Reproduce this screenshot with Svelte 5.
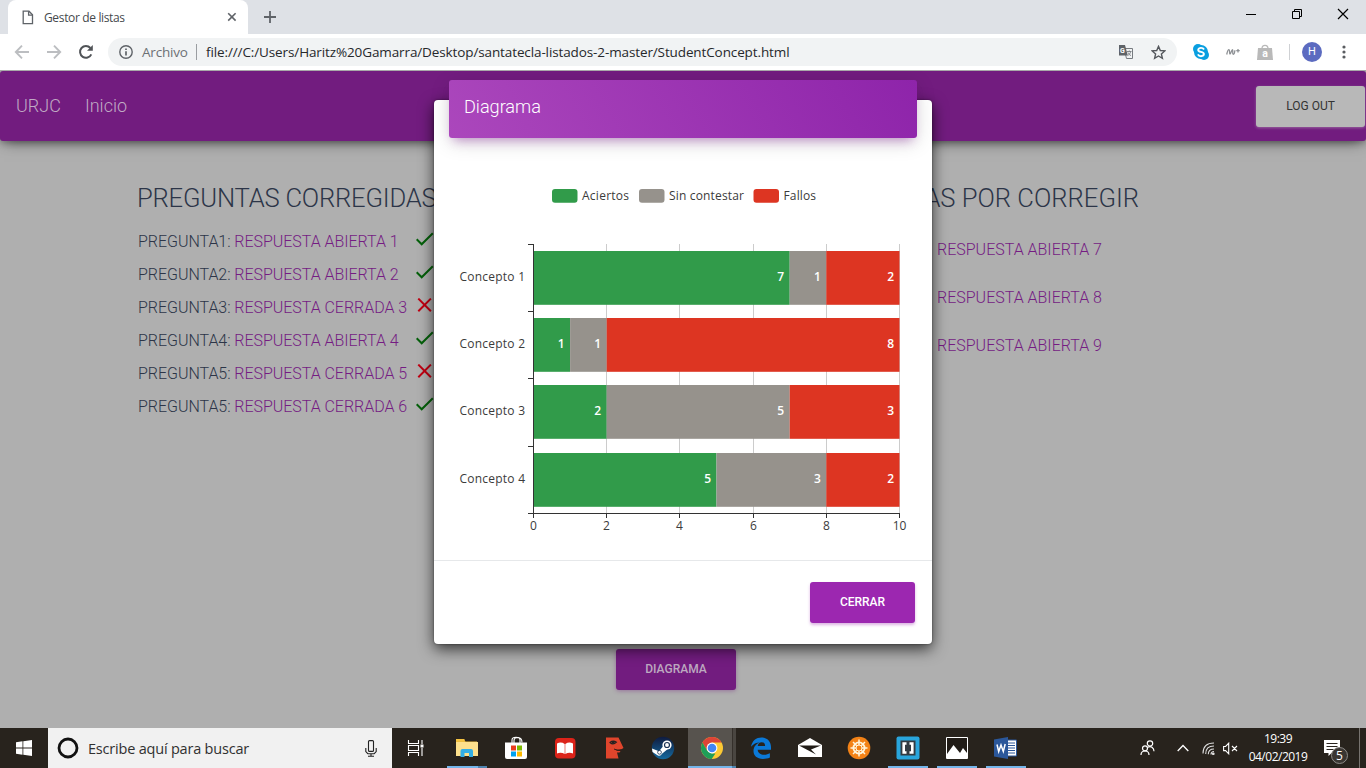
<script>
  const corrected = [
    { n: 'PREGUNTA1:', a: 'RESPUESTA ABIERTA 1', ok: true },
    { n: 'PREGUNTA2:', a: 'RESPUESTA ABIERTA 2', ok: true },
    { n: 'PREGUNTA3:', a: 'RESPUESTA CERRADA 3', ok: false },
    { n: 'PREGUNTA4:', a: 'RESPUESTA ABIERTA 4', ok: true },
    { n: 'PREGUNTA5:', a: 'RESPUESTA CERRADA 5', ok: false },
    { n: 'PREGUNTA5:', a: 'RESPUESTA CERRADA 6', ok: true }
  ];
  const pending = ['RESPUESTA ABIERTA 7', 'RESPUESTA ABIERTA 8', 'RESPUESTA ABIERTA 9'];

  const colors = ['#319b4a', '#96928c', '#dd3522'];
  const legend = [
    { t: 'Aciertos', x: 118, w: 47 },
    { t: 'Sin contestar', x: 205, w: 75 },
    { t: 'Fallos', x: 319.5, w: 32.5 }
  ];
  const X0 = 99, Y0 = 106.5, UNIT = 36.6, BAND = 67.25;
  const rows = [[7, 1, 2], [1, 1, 8], [2, 5, 3], [5, 3, 2]].map((vals, i) => {
    let sum = 0;
    const top = Math.round(Y0 + i * BAND + 6.3);
    return {
      name: `Concepto ${i + 1}`,
      top,
      segs: vals.map((v, k) => {
        const x = X0 + 0.5 + sum * UNIT;
        sum += v;
        return { v, x, w: v * UNIT, fill: colors[k], end: X0 + 0.5 + sum * UNIT };
      })
    };
  });
  const ticks = [0, 2, 4, 6, 8, 10];
  const tx = (t) => Math.round(X0 + t * UNIT) + 0.5;
</script>

<div class="screen">
  <div class="tabs">
    <div class="tab">
      <svg width="12" height="15" viewBox="0 0 12 15" fill="none" stroke="#5f6368" stroke-width="1.3"><path d="M1.2 1.2h5.8l3.5 3.6v8.800H1.2z"/><path d="M6.600 1.200v4h4"/></svg>
      <span>Gestor de listas</span>
      <svg class="tabx" width="10" height="10" viewBox="0 0 10 10" stroke="#5f6368" stroke-width="1.6"><path d="M1.200 1.200l7.400 7.400M8.600 1.200L1.200 8.600"/></svg>
    </div>
    <svg class="plus" width="14" height="14" viewBox="0 0 14 14" stroke="#5f6368" stroke-width="1.8"><path d="M7 1v12M1 7h12"/></svg>
    <div class="win">
      <svg width="12" height="12" viewBox="0 0 12 12" stroke="#000" fill="none"><path d="M1 6.500h10"/></svg>
      <svg width="12" height="12" viewBox="0 0 12 12" stroke="#000" fill="none"><path d="M1.500 3.500h7v7h-7zM3.500 3.500v-2h7v7h-2"/></svg>
      <svg width="12" height="12" viewBox="0 0 12 12" stroke="#000" stroke-width="1.200"><path d="M1 1l10 10M11 1L1 11"/></svg>
    </div>
  </div>

  <div class="toolbar">
    <svg width="16" height="16" viewBox="0 0 16 16" fill="none" stroke="#bcbec1" stroke-width="1.900"><path d="M15 8H2M8 1.700L1.800 8 8 14.300"/></svg>
    <svg width="16" height="16" viewBox="0 0 16 16" fill="none" stroke="#bcbec1" stroke-width="1.900"><path d="M1 8h13M8 1.700L14.200 8 8 14.300"/></svg>
    <svg width="16" height="16" viewBox="0 0 16 16" fill="none" stroke="#505357" stroke-width="2"><path d="M13.300 10.400A5.900 5.900 0 1 1 12.400 4"/><path d="M14.800 1v5.800H9z" fill="#505357" stroke="none"/></svg>
    <div class="omni">
      <svg width="14" height="14" viewBox="0 0 14 14" fill="none" stroke="#5f6368" stroke-width="1.400"><circle cx="7" cy="7" r="6.200"/><path d="M7 6.200v4.300M7 3.400v1.600" stroke-width="1.700"/></svg>
      <span class="arch">Archivo</span><i></i>
      <span class="url">file:///C:/Users/Haritz%20Gamarra/Desktop/santatecla-listados-2-master/StudentConcept.html</span>
      <svg class="tr" width="14" height="14" viewBox="0 0 14 14"><path d="M5 3.500h8.500v10H7.500z" fill="#f1f3f4" stroke="#777b80"/><path d="M0 0h6l2.800 10.500H0z" fill="#5f6368"/><text x="1" y="7.600" font-size="7" font-weight="700" fill="#fff" font-family="Roboto, sans-serif">G</text><path d="M8 6.500h4.500M10.300 5.500v1M11.700 6.500c-.3 2-1.700 3.200-3 4M9 7.500c.5 1.500 1.700 2.600 3 3" fill="none" stroke="#777b80" stroke-width=".9"/></svg>
      <svg class="star" width="15" height="15" viewBox="0 0 15 15" fill="none" stroke="#54575c" stroke-width="1.400"><path d="M7.500 1.400l1.800 4.100 4.500.4-3.400 3 1 4.400-3.900-2.300-3.900 2.300 1-4.400-3.400-3 4.500-.4z"/></svg>
    </div>
    <div class="ext">
      <svg width="16" height="16" viewBox="0 0 16 16"><rect width="10" height="10" rx="5" fill="#0a9fe0"/><rect x="6" y="6" width="10" height="10" rx="5" fill="#0a9fe0"/><circle cx="8" cy="8" r="7" fill="#0a9fe0"/><path d="M11 5.400C10.300 4.200 9.200 3.900 8 3.900c-1.600 0-2.800.7-2.800 2 0 2.700 5.700 1.300 5.700 4.200 0 1.300-1.200 2.100-2.900 2.100-1.500 0-2.500-.5-3.100-1.800" fill="none" stroke="#fff" stroke-width="1.900"/></svg>
      <svg width="14" height="8" viewBox="0 0 14 8" fill="none" stroke="#8d9094" stroke-width="1.300"><path d="M.7 6.500C1.500 3 2.300 1.600 3 1.700c1 .1.100 4.300 1 4.300S5.600 1.600 6.500 1.700c.9.100-.5 4.600.9 4.600 1 0 1.300-1.800 1.500-4M10.300 2.700h3.400M12 1v3.400"/></svg>
      <svg width="16" height="16" viewBox="0 0 16 16"><path d="M5 4.500C5 .2 11 .2 11 4.500" fill="none" stroke="#b9b9b9" stroke-width="1.300"/><path d="M1 4h14l1 12H0z" fill="#b9b9b9"/><text x="8" y="12.800" text-anchor="middle" font-size="10.500" font-weight="700" fill="#fff" font-family="Roboto, sans-serif">a</text></svg>
      <i></i>
      <b>H</b>
      <svg class="dots" width="4" height="14" viewBox="0 0 4 14" fill="#5a5d61"><circle cx="2" cy="2" r="1.600"/><circle cx="2" cy="7" r="1.600"/><circle cx="2" cy="12" r="1.600"/></svg>
    </div>
  </div>

  <div class="page">
    <nav>
      <span>URJC</span><span>Inicio</span>
      <button class="logout">LOG OUT</button>
    </nav>
    <div class="cols">
      <section class="left">
        <h2>PREGUNTAS CORREGIDAS</h2>
        {#each corrected as q}
          <div class="q">
            <p>{q.n} <a>{q.a}</a></p>
            {#if q.ok}
              <svg width="18" height="14" viewBox="0 0 18 14" fill="none" stroke="#04600a" stroke-width="2"><path d="M.7 7.300l5 5L16.800 1.200"/></svg>
            {:else}
              <svg width="18" height="14" viewBox="0 0 18 14" fill="none" stroke="#c00012" stroke-width="2"><path d="M2.300.600l12.600 12.600M14.900.600L2.300 13.200"/></svg>
            {/if}
          </div>
        {/each}
      </section>
      <section class="right">
        <h2>PREGUNTAS POR CORREGIR</h2>
        {#each pending as p}
          <div class="p"><a>{p}</a></div>
        {/each}
      </section>
    </div>
    <button class="diag">DIAGRAMA</button>

    <div class="overlay">
      <div class="modal">
        <header>Diagrama</header>
        <svg class="chart" width="498" height="422" viewBox="0 0 498 422">
          {#each legend as l, i}
            <rect x={l.x} y="51" width="25.500" height="13.700" rx="3" fill={colors[i]} />
            <text x={l.x + 30} y="61.500" textLength={l.w}>{l.t}</text>
          {/each}
          {#each ticks as t}
            <path d="M{tx(t)} 106V375" stroke="#ccc" />
          {/each}
          {#each rows as r}
            {#each r.segs as s}
              <rect x={s.x} y={r.top} width={s.w} height="53.800" fill={s.fill} />
              <text class="v" x={s.end - 5.5} y={r.top + 30} text-anchor="end">{s.v}</text>
            {/each}
            <text x="25.500" y={r.top + 30} textLength="65.500">{r.name}</text>
          {/each}
          <path d="M99.500 106v270M94 375.500h372" stroke="#333" />
          {#each [106.5, 173.5, 240.5, 308.5] as y}
            <path d="M94 {y}h5" stroke="#333" />
          {/each}
          {#each ticks as t}
            <path d="M{tx(t)} 376v4" stroke="#333" />
            <text x={tx(t)} y="391.500" text-anchor="middle">{t}</text>
          {/each}
        </svg>
        <footer><button class="cerrar">CERRAR</button></footer>
      </div>
    </div>
  </div>

  <div class="taskbar">
    <div class="start"><svg width="16" height="16" viewBox="0 0 16 16" fill="#fff"><path d="M0 2.300L6.500 1.300V7.500H0zM7.300 1.200L16 0v7.500H7.300zM0 8.400h6.500v6.300L0 13.700zM7.300 8.400H16V16l-8.700-1.200z"/></svg></div>
    <div class="search">
      <svg width="22" height="22" viewBox="0 0 22 22" fill="none"><circle cx="11" cy="11" r="9" stroke="#111" stroke-width="2.800"/></svg>
      <span>Escribe aquí para buscar</span>
      <svg class="mic" width="12" height="17" viewBox="0 0 12 17" fill="none" stroke="#222" stroke-width="1.100"><rect x="3.500" y=".6" width="5" height="10.800" rx="1"/><path d="M.8 8v3.500l2 2.200h6.400l2-2.200V8M6 13.700V16M3 16.300h6"/></svg>
    </div>
    <div class="slot tv"><svg width="17" height="16" viewBox="0 0 17 16" fill="none" stroke="#fff" stroke-width="1.100"><path d="M1.500 0v3.500h10V0M1.500 16v-3.500h10V16M1.500 5.500h10v5h-10zM15 0v4M15 8v8"/><path d="M13.500 4.500h3v3h-3z" fill="#fff" stroke="none"/></svg></div>
    <div class="slot open two"><svg width="24" height="20" viewBox="0 0 24 20"><path d="M1 1.500h8l1.500 2H22V18H1z" fill="#e9b93c"/><path d="M1 4h22v14H1z" fill="#fde08c"/><path d="M1 1h8.500v2.500H1z" fill="#f5c342"/><path d="M5.500 19v-6q0-2 2-2h8.500q2 0 2 2v6h-4v-4H9.500v4z" fill="#33aee4"/></svg></div>
    <div class="slot"><svg width="24" height="24" viewBox="0 0 24 24"><path d="M8 7V4q0-2.800 4-2.800T16 4v3M10 7V4.500q0-3 4-3M14 1.500q4 .3 4 5" stroke="#fff" stroke-width="1.100" fill="none"/><path d="M1 6.500h22V21q0 2-2 2H3q-2 0-2-2z" fill="#fff"/><path fill="#ea3d1f" d="M7 9.500h5v5H7z"/><path fill="#7db900" d="M13 9.500h5v5h-5z"/><path fill="#00a1f0" d="M7 15.500h5v5H7z"/><path fill="#fdb900" d="M13 15.500h5v5h-5z"/></svg></div>
    <div class="slot"><svg width="22" height="22" viewBox="0 0 22 22"><rect x="1" y="1" width="20.500" height="20.500" rx="4" fill="#dc2319"/><path d="M3 6.500Q7 4.500 10.700 7V17Q7 15 3 16.500zM11.300 7Q15 4.500 19 6.500v10Q15 15 11.300 17z" fill="#fff"/></svg></div>
    <div class="slot"><svg width="20" height="22" viewBox="0 0 20 22"><path d="M2 .5h12.500L19.500 11q-2 1.500-4.500 1.800l-3.500-.3q1.500 1.800 5 1.500L15.500 15.500H13l1.500 6H2z" fill="#e0452c"/><path d="M6 5.500q3-2.500 6.500-.3Q9 8.500 6 5.500z" fill="#e0452c" stroke="#222" stroke-width="1.100"/><circle cx="9.200" cy="5.300" r="1.400" fill="#222"/><path d="M10 12q3 2 7.500 1" stroke="#3a1b16" fill="none"/></svg></div>
    <div class="slot"><svg width="24" height="24" viewBox="0 0 24 24"><defs><linearGradient id="st" x2="0" y2="1"><stop offset="0" stop-color="#0f1b3f"/><stop offset="1" stop-color="#15699e"/></linearGradient></defs><circle cx="12" cy="12" r="11.200" fill="url(#st)"/><path d="M1 12.500l7 2.700 4.500-5.500 4 3.500-5.500 4.500q-1.500 3-4.500 1.500L1.500 16z" fill="#fff"/><circle cx="16" cy="9" r="4.600" fill="#fff"/><circle cx="16" cy="9" r="2.500" fill="#fff" stroke="#1b3354" stroke-width="1.200"/><circle cx="8.500" cy="16.300" r="1.900" fill="none" stroke="#1b3354" stroke-width=".8"/></svg></div>
    <div class="slot active"><svg width="22" height="22" viewBox="0 0 22 22"><circle cx="11" cy="11" r="11" fill="#fcc934"/><path d="M11 0a11 11 0 0 1 9.530 5.500H11L6.200 13.800 1.470 5.500A11 11 0 0 1 11 0z" fill="#dc4437"/><path d="M1.470 5.500L6.240 13.750 11 16.500h3.400L10.700 22A11 11 0 0 1 1.470 5.500z" fill="#1e9e58"/><circle cx="11" cy="11" r="5.400" fill="#fff"/><circle cx="11" cy="11" r="4.300" fill="#4285f4"/></svg></div>
    <div class="slot"><svg width="22" height="22" viewBox="0 0 22 22"><path d="M1 9.700C2.200 3.600 6.300.5 11.400.5 17.600.5 21 5 21 10v2.700H7.700c.2 3.500 3.200 5 6.300 5 2.500 0 4.300-.6 5.900-1.500v4.300c-2 1-4.300 1.400-7 1.400C7 21.900 3.500 18.500 3.500 14c0-4 2.500-7.300 6.300-8.500C6.300 5.600 3.300 7 1 9.700zM7.700 9h7.400c0-2.300-1-3.800-3.400-3.800-2.200 0-3.700 1.600-4 3.800z" fill="#0b79d8"/></svg></div>
    <div class="slot"><svg width="24" height="20" viewBox="0 0 24 20"><path d="M0 7L12 0l12 7v12H0z" fill="#fff"/><path d="M1 7.500h22L13 11.500l5 5-8.500-4.500z" fill="#211c17"/></svg></div>
    <div class="slot"><svg width="24" height="24" viewBox="0 0 24 24"><circle cx="12" cy="12" r="11.300" fill="#f38216"/><g stroke="#fff5dc" fill="none"><circle cx="12" cy="12" r="5.600" stroke-width="1.800"/><path d="M12 3.500v17M3.500 12h17M6 6l12 12M18 6L6 18" stroke-width="1.500"/></g><circle cx="12" cy="12" r="3" fill="#f38216" stroke="#fff5dc"/></svg></div>
    <div class="slot open"><svg width="24" height="24" viewBox="0 0 24 24"><rect x=".5" y=".5" width="23" height="23" rx="2" fill="#29a5dc"/><path d="M4.500 4.500h15v15h-15z" fill="#333b42"/><path d="M10.500 7.500H7.700v9h2.800M13.500 7.500h2.800v9h-2.800" fill="none" stroke="#fff" stroke-width="2.600"/></svg></div>
    <div class="slot open"><svg width="22" height="22" viewBox="0 0 22 22"><path d="M.5.500h21v21H.500z" fill="#211c17" stroke="#fff"/><path d="M1 17L7.500 8l6.500 8 3-5 4 5v5.500H1z" fill="#fff"/><path d="M2 21l5-6.500L10 19l1.500-2 3 4.500zM16 21l-2-4 2-2 3 6z" fill="#211c17" opacity="0"/></svg></div>
    <div class="slot open"><svg width="23" height="22" viewBox="0 0 23 22"><path d="M13 3h9.500v16H13z" fill="#fff" stroke="#2b579a"/><path d="M14 6h7M14 8.500h7M14 11h7M14 13.500h7M14 16h7" stroke="#2b579a"/><path d="M0 2.500L14 0v22L0 19.500z" fill="#2b579a"/><path d="M3 7.500l1.700 7 2.300-6.500 2.300 6.500 1.900-7.500" fill="none" stroke="#fff" stroke-width="1.500"/></svg></div>
    <div class="tray">
      <svg class="pp" width="15" height="16" viewBox="0 0 15 16" fill="none" stroke="#fff" stroke-width="1.200"><circle cx="10" cy="3.500" r="2.700"/><circle cx="5" cy="8.300" r="2.500"/><path d="M1 15q0-4 4-4t4 4M7.800 7.200Q10 6 12 7.200q2 1.500 2 4"/></svg>
      <svg class="ch" width="12" height="8" viewBox="0 0 12 8" fill="none" stroke="#fff" stroke-width="1.300"><path d="M.7 7L6 1.500 11.300 7"/></svg>
      <svg class="wf" width="13" height="13" viewBox="0 0 13 13" fill="none" stroke="#ddd" stroke-width="1.100"><path d="M1 11.500Q1 1 12 1M3.700 12Q3.700 4 12 4M6.300 12.300Q6.300 7 12 7M9 12.500q0-3 3-3"/><circle cx="11.300" cy="11.800" r=".8" fill="#fff"/></svg>
      <svg class="mu" width="15" height="13" viewBox="0 0 15 13" fill="none" stroke="#fff" stroke-width="1.100"><path d="M.6 4.500h2L5.700 1.200v10.600L2.600 8.600h-2zM9 4l5 5M14 4L9 9"/></svg>
      <div class="clock"><span>19:39</span><span class="date">04/02/2019</span></div>
      <svg class="no" width="26" height="26" viewBox="0 0 26 26"><path d="M1 1h16v13H8.500L5.500 17v-3H1z" fill="#fff"/><path d="M3.500 4.500h11M3.500 7.500h11M3.500 10.500h7" stroke="#2a251f"/><circle cx="16.500" cy="16.500" r="8" fill="#3a3632" stroke="#8d8b88"/><text x="16.500" y="21" text-anchor="middle" font-size="12" fill="#fff" font-family="Open Sans, sans-serif">5</text></svg>
      <i></i>
    </div>
  </div>
</div>

<style>
  :global(body) { margin: 0; overflow: hidden; }
  .screen { width: 1366px; height: 768px; display: flex; flex-direction: column; font-family: 'Open Sans', sans-serif; overflow: hidden; }
  .screen svg { flex: none; display: block; }
  button { border: 0; padding: 0 0 2px; font: 500 12px Roboto, sans-serif; border-radius: 3px; height: 41px; box-sizing: border-box; }
  .tabs { height: 34px; background: #dee1e6; display: flex; align-items: center; flex: none; }
  .tab { box-sizing: border-box; margin-left: 8px; width: 240px; height: 34px; background: #fff; border-radius: 8px 8px 0 0; display: flex; align-items: center; padding: 0 11px 0 14px; font-size: 12px; color: #45494d; }
  .tab span { margin-left: 10px; letter-spacing: -0.35px; }
  .tabx { margin-left: auto; }
  .plus { margin-left: 15px; }
  .win { margin-left: auto; display: flex; gap: 34px; padding: 0 17px 6px 0; }
  .toolbar { height: 36px; background: #fff; border-bottom: 1px solid #a9aaa9; display: flex; align-items: center; padding-left: 14px; gap: 16px; flex: none; }
  .omni { margin-left: -2px; box-sizing: border-box; width: 1069px; height: 28px; border-radius: 14px; background: #f1f3f4; display: flex; align-items: center; padding: 0 11px; font-size: 13.5px; }
  .arch { margin-left: 9px; color: #6c7074; letter-spacing: -0.2px; width: 45px; white-space: nowrap; }
  .omni i { width: 1px; height: 16px; background: #9a9da1; margin: 0 9px; }
  .url { color: #26282b; letter-spacing: -0.115px; white-space: nowrap; }
  .tr { margin-left: auto; }
  .star { margin-left: 18px; }
  .ext { display: flex; align-items: center; flex: 1; }
  .ext svg:nth-child(2) { margin-left: 17px; }
  .ext svg:nth-child(3) { margin-left: 17px; }
  .ext i { width: 1px; height: 16px; background: #cfd1d4; margin-left: 16px; }
  .ext b { width: 20px; height: 20px; border-radius: 10px; background: #5c6bc0; color: #fff; font: 11px/20px Roboto, sans-serif; text-align: center; margin-left: 12px; }
  .dots { margin-left: 20px; }

  .page { position: relative; height: 657px; flex: none; background: #afafaf; display: flex; flex-direction: column; overflow: hidden; }
  nav { height: 70px; flex: none; background: #721c7f; border-radius: 3px; box-shadow: 0 4px 14px -4px rgba(0,0,0,.65), 0 2px 6px rgba(0,0,0,.2); display: flex; align-items: center; padding: 0 1px 0 16px; box-sizing: border-box; font: 300 18px Roboto, sans-serif; color: #c0abc4; gap: 24px; }
  nav span { padding-bottom: 2px; }
  .logout { margin-left: auto; width: 109px; background: #b8b8b8; color: #333; font-weight: 400; box-shadow: 0 1px 3px rgba(190,170,190,.5); margin-top: 1px; }
  .cols { display: flex; justify-content: space-between; padding: 37px 227px 0 137px; height: 508px; box-sizing: border-box; flex: none; font-family: Roboto, sans-serif; }
  h2 { font: 300 25.6px/40px Roboto, sans-serif; margin: 0 0 6px; color: #2c3548; white-space: nowrap; }
  .left h2 { letter-spacing: -0.2px; }
  .q { height: 33px; display: flex; align-items: center; font-weight: 300; font-size: 16px; color: #2c3548; }
  .q p { margin: 2px 0 0 1px; width: 278px; white-space: nowrap; letter-spacing: -0.04px; }
  a { color: #751c83; }
  .q svg { margin-bottom: 4px; }
  .p { height: 48px; width: 202px; margin-left: 73px; display: flex; align-items: center; font-weight: 300; font-size: 16px; }
  .right { width: 275px; }
  .right h2 { width: 275px; display: flex; justify-content: flex-end; margin-bottom: 7px; }
  .diag { width: 120px; margin-left: 616px; flex: none; background: #721c7f; color: #bda9c0; box-shadow: 0 1px 4px rgba(114,28,127,.4); }
  .overlay { position: absolute; inset: 0; display: flex; align-items: flex-start; padding: 29px 0 0 434px; }
  .modal { width: 498px; height: 544px; border-radius: 4px; background: #fff; display: flex; flex-direction: column; box-shadow: 0 5px 15px rgba(0,0,0,.7), 0 0 2px rgba(0,0,0,.5); }
  header { height: 58px; box-sizing: border-box; flex: none; margin: -20px 15px 0; border-radius: 3px; background: linear-gradient(60deg, #ab47bc, #8e24aa); box-shadow: 0 5px 20px rgba(0,0,0,.14), 0 7px 10px -5px rgba(156,39,176,.45); color: #fff; font: 300 18.2px/54px Roboto, sans-serif; letter-spacing: -0.05px; padding-left: 15px; }
  .chart { font-family: 'Open Sans', sans-serif; font-size: 12px; fill: #3b3b3b; }
  .chart .v { fill: #fff; font-weight: 600; }
  footer { height: 84px; box-sizing: border-box; border-top: 1px solid #e6e8ea; display: flex; justify-content: flex-end; align-items: flex-start; padding: 21px 17px 0; }
  .cerrar { width: 105px; background: #9c27b0; color: #fff; box-shadow: 0 2px 3px rgba(156,39,176,.35); }

  .taskbar { height: 40px; flex: none; background: #28231d; display: flex; }
  .start { width: 48px; display: flex; align-items: center; justify-content: center; }
  .search { width: 344px; box-sizing: border-box; background: #f1f1f1; display: flex; align-items: center; padding: 0 15px 0 9px; font-size: 14.5px; color: #303030; }
  .search span { margin-left: 9px; letter-spacing: -0.2px; margin-top: 1px; white-space: nowrap; }
  .mic { margin-left: auto; }
  .slot { width: 49px; display: flex; align-items: center; justify-content: center; flex: none; }
  .tv { width: 50px; padding-right: 3px; box-sizing: border-box; }
  .open { background: linear-gradient(#74b5ea, #74b5ea) center bottom / 40px 2px no-repeat; }
  .two { background: linear-gradient(90deg, #74b5ea 31px, #4f84af 31px) center bottom / 40px 2px no-repeat; }
  .active { background: linear-gradient(90deg, #74b5ea 44px, #4f84af 44px) 1px bottom / 48px 2px no-repeat, linear-gradient(90deg, transparent 1px, #57534e 1px 45px, #35302b 45px 46px, #4a4641 46px); }
  .tray { flex: 1; display: flex; align-items: center; padding-left: 110px; }
  .ch { margin-left: 22px; }
  .wf { margin-left: 13px; }
  .mu { margin-left: 8px; }
  .clock { width: 60px; margin-left: 10px; display: flex; flex-direction: column; align-items: center; font-size: 12px; line-height: 18px; color: #fff; letter-spacing: -0.5px; }
  .no { margin-left: 15px; margin-top: 7px; }
  .tray i { width: 1px; height: 40px; background: #77736f; margin-left: 10px; }
</style>
